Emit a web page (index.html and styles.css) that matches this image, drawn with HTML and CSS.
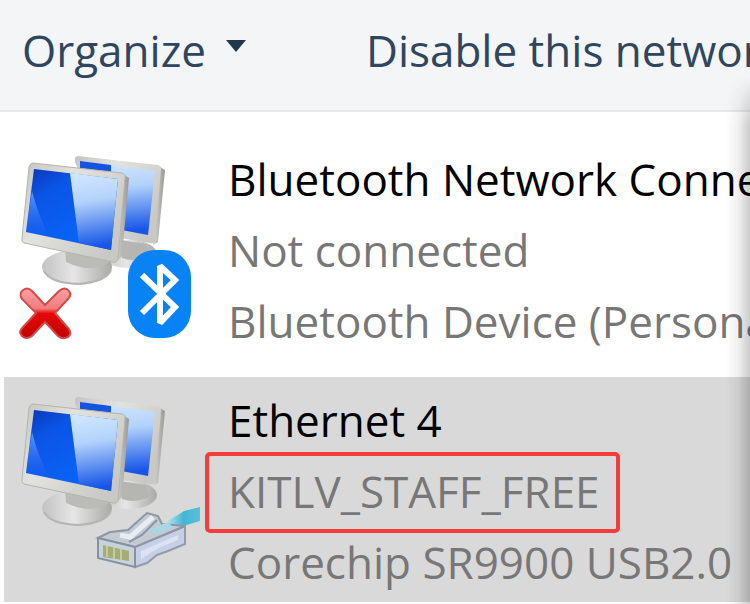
FILE: index.html
```html
<!DOCTYPE html>
<html lang="en">
<head>
  <meta charset="UTF-8" />
  <meta name="viewport" content="width=device-width, initial-scale=1" />
  <title>Network Connections</title>
  <link rel="stylesheet" href="styles.css">
</head>
<body>

  <!-- shared drawings -->
  <svg class="defs" width="0" height="0" aria-hidden="true">
    <defs>
      <linearGradient id="dark" x1="0" y1="0" x2="0.7" y2="1">
        <stop offset="0" stop-color="#0a35b8" />
        <stop offset="0.3" stop-color="#0b55e6" />
        <stop offset="1" stop-color="#0768fb" />
      </linearGradient>
      <linearGradient id="glare" x1="0" y1="0" x2="0.1" y2="1">
        <stop offset="0" stop-color="#d2e8ff" />
        <stop offset="0.4" stop-color="#b3d2fb" />
        <stop offset="1" stop-color="#1655e8" />
      </linearGradient>
      <linearGradient id="corner" x1="0" y1="0" x2="0" y2="1">
        <stop offset="0" stop-color="#8cb8ff" stop-opacity="0.7" />
        <stop offset="1" stop-color="#1d5bf0" stop-opacity="0.2" />
      </linearGradient>
      <linearGradient id="frame" x1="0" y1="0" x2="1" y2="0.6">
        <stop offset="0" stop-color="#c4c4c2" />
        <stop offset="0.4" stop-color="#e2e2df" />
        <stop offset="1" stop-color="#c8c8c4" />
      </linearGradient>
      <linearGradient id="side" x1="0" y1="0" x2="1" y2="0">
        <stop offset="0" stop-color="#d6d6d2" />
        <stop offset="1" stop-color="#989895" />
      </linearGradient>
      <linearGradient id="stand" x1="0" y1="0" x2="1" y2="0">
        <stop offset="0" stop-color="#c2c2c2" />
        <stop offset="0.45" stop-color="#e6e6e6" />
        <stop offset="1" stop-color="#a9a9a7" />
      </linearGradient>
      <linearGradient id="red" x1="0" y1="0" x2="0" y2="1">
        <stop offset="0" stop-color="#f7a3a3" />
        <stop offset="0.4" stop-color="#f27c7c" />
        <stop offset="0.5" stop-color="#e60808" />
        <stop offset="1" stop-color="#c00505" />
      </linearGradient>
      <linearGradient id="cable" x1="0" y1="0" x2="1" y2="0">
        <stop offset="0" stop-color="#b9e2ee" />
        <stop offset="0.5" stop-color="#42b7d5" />
        <stop offset="1" stop-color="#5cbfd8" />
      </linearGradient>
    </defs>

    <symbol id="monitors" viewBox="0 0 200 225">
      <!-- back monitor -->
      <ellipse cx="125" cy="118" rx="28" ry="14" fill="url(#stand)" />
      <path d="M116 104 L142 108 L146 119 Q132 127 118 122Z" fill="#b5b5b1" />
      <path d="M153 29 L161 34 L154 106 L149 109Z" fill="url(#side)" />
      <path d="M74 20 L154 29 Q158 30 157 34 L151 104 Q150 108 146 107 L104 100 L71 26 Q70 20 74 20Z" fill="url(#frame)" />
      <path d="M76 25 L151 35 L144 99 L112 93 L112 37Z" fill="url(#glare)" />
      <path d="M76 25 L107 29 L107 37 L76 32Z" fill="#1554df" />
      <!-- front monitor -->
      <ellipse cx="73" cy="131" rx="35" ry="17" fill="url(#stand)" />
      <path d="M40 135 Q46 147 74 148 Q102 146 107 134" fill="none" stroke="#b5b5b3" stroke-width="2" />
      <path d="M61 113 L97 119 L105 126 Q88 138 62 126Z" fill="#bbbbb7" />
      <path d="M117 37 L125 42 L118 120 L111 128Z" fill="url(#side)" />
      <path d="M29 27 L118 37 Q122 38 121 42 L114 123 Q113 127 109 126 L20 107 Q17 106 18 102 L25 31 Q26 27 29 27Z" fill="url(#frame)" stroke="#b4b4b0" stroke-width="1" />
      <path d="M30 33 L114 43 L107 114 L22 96Z" fill="url(#dark)" />
      <path d="M66 37 L114 43 L107 114 L75 107Z" fill="url(#glare)" />
      <path d="M28 55 Q34 79 45 100 L22 96Z" fill="url(#corner)" />
    </symbol>
  </svg>

  <header class="toolbar">
    <button type="button" class="command">
      Organize
      <svg class="caret" viewBox="0 0 20 12" aria-hidden="true"><path d="M0 0 H20 L10 12Z" /></svg>
    </button>
    <button type="button" class="command">Disable this network device</button>
  </header>

  <main>
    <ul class="connections">
      <li class="connection">
        <svg class="icon" viewBox="0 0 200 225" aria-hidden="true">
          <use href="#monitors" />
          <path d="M18 155 Q23 150 28 155 L41 169 L55 155 Q61 150 65 155 Q68 159 64 163 L51 177 L65 193 Q68 198 64 201 Q59 204 54 200 L41 186 L28 200 Q22 204 18 200 Q14 196 19 191 L32 177 L18 163 Q15 158 18 155Z" fill="url(#red)" stroke="#d44a4a" stroke-width="2" />
          <rect x="124" y="114" width="63" height="88" rx="27" fill="#0883f5" />
          <path d="M138 139 L171 171 L156 187 V130 L171 144 L138 177" fill="none" stroke="#fff" stroke-width="6" stroke-miterlimit="2" />
        </svg>
        <div class="details">
          <p class="name">Bluetooth Network Connection</p>
          <p>Not connected</p>
          <p>Bluetooth Device (Personal Area Network)</p>
        </div>
      </li>

      <li class="connection selected">
        <svg class="icon" viewBox="0 0 200 225" aria-hidden="true">
          <use href="#monitors" />
          <!-- network plug -->
          <path d="M163 144 Q176 137 180 134 L196 130 V144 L176 150 L166 151Z" fill="url(#cable)" />
          <path d="M131 170 L181 149 V167 L164 174 L153 178 L143 186 L131 190Z" fill="#c5cfe5" stroke="#929cab" stroke-width="2" />
          <path d="M94 161 L106 155 L124 153 L143 136 L154 139 L158 147 L181 149 L131 170Z" fill="#c3cad3" stroke="#8d97a3" stroke-width="2" />
          <path d="M94 161 L131 170 V190 L94 181Z" fill="#c8d2dc" stroke="#8792a0" stroke-width="2" />
          <path d="M99 168 L125 174 V184 L99 180Z" fill="#a5ad77" />
          <path d="M103 169 V180 M110 170 V182 M117 172 V183" stroke="#c6cb9a" stroke-width="2" />
          <path d="M126 160 L149 140 M116 158 L130 161" stroke="#e8edf1" stroke-width="5" />
          <path d="M125 165 L138 158 L153 143" fill="none" stroke="#8996a4" stroke-width="2" />
          <path d="M145 153 L164 145 L169 150 L151 157Z" fill="#a8d8e3" />
          <path d="M137 174 L174 158 V163 L154 171 L137 182Z" fill="#dce3f3" />
        </svg>
        <div class="details">
          <p class="name">Ethernet 4</p>
          <p><span class="marked">KITLV_STAFF_FREE</span></p>
          <p>Corechip SR9900 USB2.0</p>
        </div>
      </li>
    </ul>
  </main>

</body>
</html>
```

FILE: styles.css
```css
* {
  box-sizing: border-box;
}

body {
  margin: 0;
  font-family: 'Segoe UI', 'Open Sans', sans-serif;
  font-size: 44px;
  background-color: #fff;
  color: #777;
  white-space: nowrap;
  overflow: hidden;
}

/* shadow of the window lying to the right */
body::after {
  content: '';
  position: absolute;
  top: 76px;
  right: 0;
  bottom: 0;
  width: 24px;
  background: linear-gradient(to right, rgba(0, 0, 0, 0), rgba(0, 0, 0, 0.06) 50%, rgba(0, 0, 0, 0.2));
  -webkit-mask-image: linear-gradient(transparent, #000 50px);
  mask-image: linear-gradient(transparent, #000 50px);
  pointer-events: none;
}

.defs {
  position: absolute;
}

.toolbar {
  display: flex;
  gap: 120px;
  height: 112px;
  padding: 14px 22px;
  background-color: #f3f5f7;
  border-bottom: 2px solid #e6e9ea;
  overflow: hidden;
}

.command {
  display: flex;
  flex-shrink: 0;
  gap: 20px;
  height: 72px;
  padding: 0;
  border: none;
  background: none;
  color: #2f4560;
  font: inherit;
  line-height: 72px;
}

.caret {
  width: 20px;
  height: 12px;
  margin-top: 26px;
  fill: #22364d;
}

.connections {
  display: flex;
  flex-direction: column;
  gap: 16px;
  margin: 0;
  padding: 24px 0 2px 4px;
  list-style: none;
}

.connection {
  display: flex;
  gap: 24px;
  overflow: hidden;
}

.selected {
  background-color: #d9d9d9;
}

.icon {
  flex-shrink: 0;
  width: 200px;
  height: 225px;
}

.details {
  padding: 8px 0 4px;
}

.details p {
  margin: 0;
  line-height: 71px;
}

.details .name {
  color: #000;
}

.marked {
  display: inline-block;
  position: relative;
}

.marked::after {
  content: '';
  position: absolute;
  inset: -4px -20px -6px -23px;
  border: 4px solid #f33d3d;
  border-radius: 5px;
}
```
